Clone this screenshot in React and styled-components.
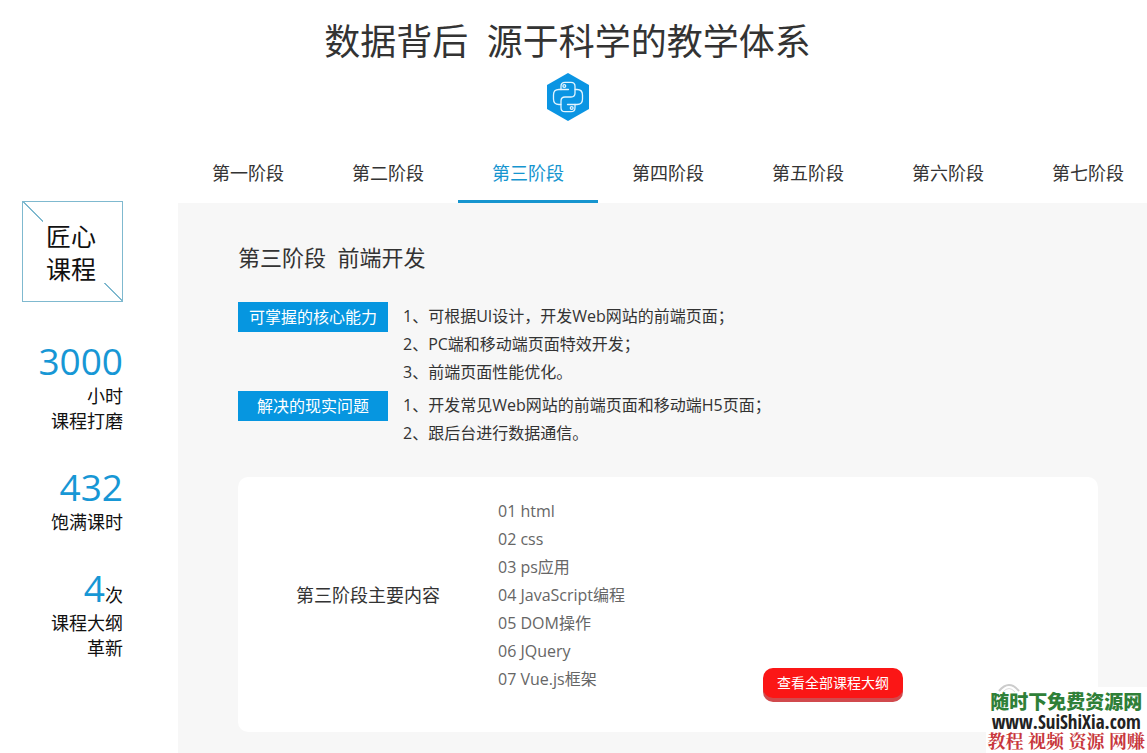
import React, { useState } from "react";
import styled, { createGlobalStyle } from "styled-components";

const sans = '"Open Sans", "Noto Sans CJK SC", sans-serif';
const blue = "#0696e0";

const GlobalStyle = createGlobalStyle`
  * { box-sizing: border-box; }
  body {
    margin: 0;
    background: #fff;
    color: #333;
    font-family: ${sans};
    overflow-x: hidden;
  }
  h1, h2, h3, p, ul, ol, dl, dd { margin: 0; padding: 0; font-weight: 400; }
  ul, ol { list-style: none; }
  button { font-family: inherit; border: 0; cursor: pointer; }
`;

const Page = styled.div`
  position: relative;
  display: flex;
  flex-direction: column;
  min-height: 100vh;
  overflow: hidden;
`;

const Header = styled.header`
  display: flex;
  flex-direction: column;
  align-items: center;
  padding: 16px 12px 0 0;
`;

const Title = styled.h1`
  font-size: 36px;
  line-height: 52px;
  white-space: pre;
`;

const Badge = styled.svg`
  width: 42px;
  height: 48px;
  margin-top: 5px;
`;

const Body = styled.div`
  display: grid;
  grid-template-columns: 178px minmax(0, 1fr);
  flex: 1;
  padding-top: 24px;
`;

const Aside = styled.aside`
  display: flex;
  flex-direction: column;
  align-items: flex-end;
  gap: 30px;
  padding: 56px 55px 0 0;
  color: #111;
`;

const Craft = styled.h2`
  display: flex;
  align-items: center;
  justify-content: center;
  width: 101px;
  height: 101px;
  margin-bottom: 6px;
  padding: 2px 25px 0 23px;
  border: 1px solid #7fb9cf;
  background:
    linear-gradient(45deg, transparent 49%, #7fb9cf 49%, #7fb9cf 53%, transparent 53%) left top / 20px 20px no-repeat,
    linear-gradient(45deg, transparent 49%, #7fb9cf 49%, #7fb9cf 53%, transparent 53%) right bottom / 18px 18px no-repeat;
  font-size: 25px;
  line-height: 33px;
`;

const Stat = styled.div`
  text-align: right;
  font-size: 18px;
  line-height: 25px;
`;

const Figure = styled.p`
  padding-bottom: 1px;
  color: #1797d5;
  font-size: 37px;
  line-height: 45px;
`;

const Unit = styled.span`
  color: #111;
  font-size: 18px;
  line-height: 18px;
`;

const Main = styled.main`
  display: flex;
  flex-direction: column;
`;

const Tabs = styled.div`
  display: flex;
`;

const Tab = styled.button`
  flex: none;
  width: 140px;
  height: 58px;
  padding: 0;
  border-bottom: 3px solid ${(p) => (p.$active ? "#1695cf" : "transparent")};
  background: none;
  color: ${(p) => (p.$active ? "#1695cf" : "#333")};
  font-size: 18px;
  line-height: 26px;
`;

const Panel = styled.section`
  flex: 1;
  padding: 38px 49px 21px 60px;
  background: #f7f7f7;
`;

const PanelTitle = styled.h2`
  margin-bottom: 29px;
  font-size: 22px;
  line-height: 32px;
  white-space: pre;
`;

const Skill = styled.div`
  display: flex;
  gap: 15px;
  margin-bottom: 5px;
`;

const SkillName = styled.h3`
  flex: none;
  width: 150px;
  height: 30px;
  background: ${blue};
  color: #fff;
  font-size: 16px;
  line-height: 30px;
  text-align: center;
`;

const Lines = styled.ol`
  font-size: 16px;
  line-height: 28px;
  color: ${(p) => (p.$muted ? "#666" : "#333")};
`;

const Card = styled.div`
  display: grid;
  grid-template-columns: 260px 265px auto;
  justify-content: start;
  min-height: 255px;
  margin-top: 30px;
  padding: 20px 0 34px;
  border-radius: 10px;
  background: #fff;
`;

const CardName = styled.h3`
  align-self: center;
  padding-bottom: 5px;
  font-size: 18px;
  line-height: 28px;
  text-align: center;
`;

const Outline = styled.button`
  align-self: end;
  width: 140px;
  height: 30px;
  padding: 0;
  border-radius: 10px;
  background: #fb1616;
  box-shadow: 0 4px 0 #d14a4d;
  color: #fff;
  font-size: 14px;
  line-height: 30px;
`;

const Watermark = styled.div`
  position: absolute;
  right: 0;
  bottom: 0;
  padding: 5px 2px 1px;
  background: #fff;
  text-align: center;
  white-space: nowrap;
`;

const Arc = styled.svg`
  position: absolute;
  left: 10px;
  top: -4px;
  width: 26px;
  height: 10px;
`;

const MarkName = styled.p`
  position: relative;
  color: #2f8038;
  font-size: 19px;
  font-weight: 900;
  line-height: 20px;
`;

const MarkSite = styled.p`
  position: relative;
  color: #222;
  font-family: "Open Sans Condensed", "Roboto Condensed", "Liberation Sans", sans-serif;
  font-size: 19px;
  font-weight: 700;
  line-height: 20px;
`;

const MarkTags = styled.p`
  position: relative;
  color: #c8373c;
  font-family: "Liberation Serif", "Noto Serif CJK SC", "Noto Sans CJK SC", serif;
  font-size: 18px;
  font-weight: 700;
  line-height: 20px;
`;

const stages = ["第一阶段", "第二阶段", "第三阶段", "第四阶段", "第五阶段", "第六阶段", "第七阶段"];

const skills = [
  {
    name: "可掌握的核心能力",
    lines: ["1、可根据UI设计，开发Web网站的前端页面；", "2、PC端和移动端页面特效开发；", "3、前端页面性能优化。"],
  },
  {
    name: "解决的现实问题",
    lines: ["1、开发常见Web网站的前端页面和移动端H5页面；", "2、跟后台进行数据通信。"],
  },
];

const topics = ["01 html", "02 css", "03 ps应用", "04 JavaScript编程", "05 DOM操作", "06 JQuery", "07 Vue.js框架"];

const stats = [
  { value: "3000", lines: ["小时", "课程打磨"] },
  { value: "432", lines: ["饱满课时"] },
  { value: "4", unit: "次", lines: ["课程大纲", "革新"] },
];

function PythonBadge() {
  return (
    <Badge viewBox="0 0 42 48" aria-hidden="true">
      <path d="M21 0 42 12V36L21 48 0 36V12Z" fill="#0b95e3" />
      <g fill="none" stroke="#e4f5ff" strokeWidth="1.3" strokeLinecap="round" strokeLinejoin="round">
        <path d="M21.5 16.5H12Q6.5 16.5 6.5 22V26Q6.5 31.5 12 31.5H13.8" />
        <path d="M14 16.5V13.3Q14 9.3 18 9.3H24Q28 9.3 28 13.3V20Q28 24 24 24H18Q14 24 14 28V34.7Q14 38.7 18 38.7H24Q28 38.7 28 34.7V31.5" />
        <path d="M20.5 31.5H30Q35.5 31.5 35.5 26V22Q35.5 16.5 30 16.5H28.2" />
        <circle cx="17.3" cy="13" r="1.4" />
        <circle cx="24.7" cy="35" r="1.4" />
      </g>
    </Badge>
  );
}

export default function App() {
  const [active, setActive] = useState(2);
  return (
    <Page>
      <GlobalStyle />
      <Header>
        <Title>{"数据背后\u00a0\u00a0源于科学的教学体系"}</Title>
        <PythonBadge />
      </Header>
      <Body>
        <Aside>
          <Craft>匠心课程</Craft>
          {stats.map((s) => (
            <Stat key={s.value}>
              <Figure>
                {s.value}
                {s.unit && <Unit>{s.unit}</Unit>}
              </Figure>
              {s.lines.map((l) => (
                <p key={l}>{l}</p>
              ))}
            </Stat>
          ))}
        </Aside>
        <Main>
          <Tabs role="tablist">
            {stages.map((s, i) => (
              <Tab key={s} role="tab" aria-selected={i === active} $active={i === active} onClick={() => setActive(i)}>
                {s}
              </Tab>
            ))}
          </Tabs>
          <Panel role="tabpanel">
            <PanelTitle>{"第三阶段\u00a0\u00a0前端开发"}</PanelTitle>
            {skills.map((s) => (
              <Skill key={s.name}>
                <SkillName>{s.name}</SkillName>
                <Lines>
                  {s.lines.map((l) => (
                    <li key={l}>{l}</li>
                  ))}
                </Lines>
              </Skill>
            ))}
            <Card>
              <CardName>第三阶段主要内容</CardName>
              <Lines $muted>
                {topics.map((t) => (
                  <li key={t}>{t}</li>
                ))}
              </Lines>
              <Outline type="button">查看全部课程大纲</Outline>
            </Card>
          </Panel>
        </Main>
      </Body>
      <Watermark>
        <Arc viewBox="0 0 26 10" aria-hidden="true">
          <path d="M3 8Q13 -4 23 8" fill="none" stroke="#ccc" strokeWidth="2" />
          <path d="M7 9Q13 2 19 9" fill="none" stroke="#ddd" strokeWidth="1" />
        </Arc>
        <MarkName>随时下免费资源网</MarkName>
        <MarkSite>www.SuiShiXia.com</MarkSite>
        <MarkTags>教程 视频 资源 网赚</MarkTags>
      </Watermark>
    </Page>
  );
}
